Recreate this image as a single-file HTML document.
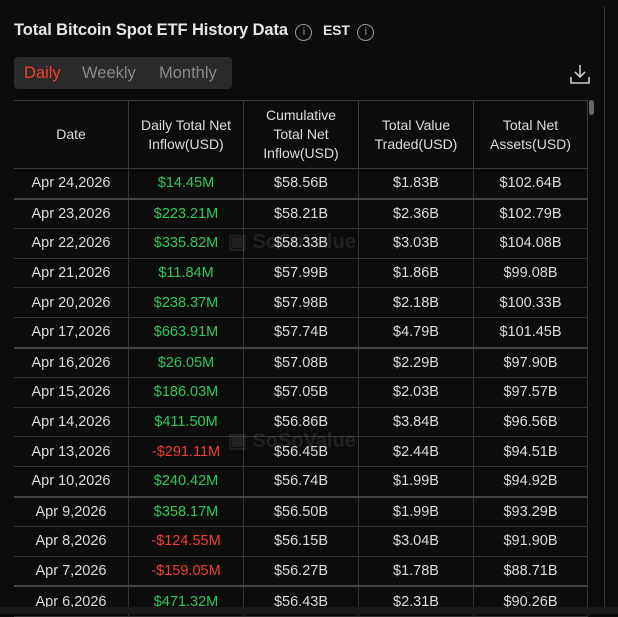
<!DOCTYPE html>
<html><head><meta charset="utf-8"><style>
body{margin:0;width:618px;height:614px;background:#0c0c0c;font-family:"Liberation Sans",sans-serif;overflow:hidden;position:relative;color:#ddd}
.title{position:absolute;left:14px;top:21px;font-size:16.5px;font-weight:bold;color:#e6e6e6;letter-spacing:-0.1px}
.info{display:inline-block;width:15px;height:15px;border:1.3px solid #999;border-radius:50%;font-size:11px;color:#999;text-align:center;line-height:15px;font-weight:normal;vertical-align:0px;margin-left:3px}
.tabs{position:absolute;left:14px;top:57px;width:218px;height:32px;background:#2a2a2a;border-radius:4px;font-size:16.5px;color:#888}
.tabs span{position:absolute;top:7px}
.vline{position:absolute;left:604px;top:6px;width:1px;height:608px;background:#333}
table{position:absolute;left:14px;top:100px;border-collapse:collapse;width:574px}
td{border:1px solid #333;text-align:center;font-size:14.5px;color:#ddd;height:28.6px;padding:0}
th{border:1px solid #3a3a3a;font-weight:normal;font-size:14px;color:#ddd;line-height:19px;height:67px;padding:0}
tr.sep td{border-bottom:2px solid #444}
.g{color:#2fc85a}.r{color:#f0402f}
table tr td:first-child,table tr th:first-child{border-left:none}
.wm{position:absolute;font-size:20px;font-weight:bold;color:rgba(255,255,255,0.09)}
</style></head><body>
<div class="vline"></div>
<div class="title">Total Bitcoin Spot ETF History Data <span class="info">i</span> <span style="font-size:14px;margin-left:6px">EST</span> <span class="info">i</span></div>
<div class="tabs"><span style="left:10px;color:#f0402f">Daily</span><span style="left:68px">Weekly</span><span style="left:145px">Monthly</span></div>
<svg style="position:absolute;left:569px;top:63px" width="22" height="22" viewBox="0 0 22 22" fill="none" stroke="#ccc" stroke-width="1.6"><path d="M11 2v12M6 9l5 5 5-5M2 14v6h18v-6"/></svg>
<div style="position:absolute;left:589px;top:100px;width:5px;height:15px;background:#666;border-radius:3px"></div>
<table>
<tr><th style="width:114px">Date</th><th style="width:114px">Daily Total Net<br>Inflow(USD)</th><th style="width:114px">Cumulative<br>Total Net<br>Inflow(USD)</th><th style="width:114px">Total Value<br>Traded(USD)</th><th>Total Net<br>Assets(USD)</th></tr>
<tr class="sep"><td>Apr 24,2026</td><td class="g">$14.45M</td><td>$58.56B</td><td>$1.83B</td><td>$102.64B</td></tr>
<tr><td>Apr 23,2026</td><td class="g">$223.21M</td><td>$58.21B</td><td>$2.36B</td><td>$102.79B</td></tr>
<tr><td>Apr 22,2026</td><td class="g">$335.82M</td><td>$58.33B</td><td>$3.03B</td><td>$104.08B</td></tr>
<tr><td>Apr 21,2026</td><td class="g">$11.84M</td><td>$57.99B</td><td>$1.86B</td><td>$99.08B</td></tr>
<tr><td>Apr 20,2026</td><td class="g">$238.37M</td><td>$57.98B</td><td>$2.18B</td><td>$100.33B</td></tr>
<tr class="sep"><td>Apr 17,2026</td><td class="g">$663.91M</td><td>$57.74B</td><td>$4.79B</td><td>$101.45B</td></tr>
<tr><td>Apr 16,2026</td><td class="g">$26.05M</td><td>$57.08B</td><td>$2.29B</td><td>$97.90B</td></tr>
<tr><td>Apr 15,2026</td><td class="g">$186.03M</td><td>$57.05B</td><td>$2.03B</td><td>$97.57B</td></tr>
<tr><td>Apr 14,2026</td><td class="g">$411.50M</td><td>$56.86B</td><td>$3.84B</td><td>$96.56B</td></tr>
<tr><td>Apr 13,2026</td><td class="r">-$291.11M</td><td>$56.45B</td><td>$2.44B</td><td>$94.51B</td></tr>
<tr class="sep"><td>Apr 10,2026</td><td class="g">$240.42M</td><td>$56.74B</td><td>$1.99B</td><td>$94.92B</td></tr>
<tr><td>Apr 9,2026</td><td class="g">$358.17M</td><td>$56.50B</td><td>$1.99B</td><td>$93.29B</td></tr>
<tr><td>Apr 8,2026</td><td class="r">-$124.55M</td><td>$56.15B</td><td>$3.04B</td><td>$91.90B</td></tr>
<tr class="sep"><td>Apr 7,2026</td><td class="r">-$159.05M</td><td>$56.27B</td><td>$1.78B</td><td>$88.71B</td></tr>
<tr><td>Apr 6,2026</td><td class="g">$471.32M</td><td>$56.43B</td><td>$2.31B</td><td>$90.26B</td></tr>
</table>
<div class="wm" style="left:228px;top:229px">▣ SoSoValue</div>
<div class="wm" style="left:228px;top:428px">▣ SoSoValue</div>
<div style="position:absolute;left:0;top:607px;width:618px;height:7px;background:#1a1a1a"></div>
</body></html>
